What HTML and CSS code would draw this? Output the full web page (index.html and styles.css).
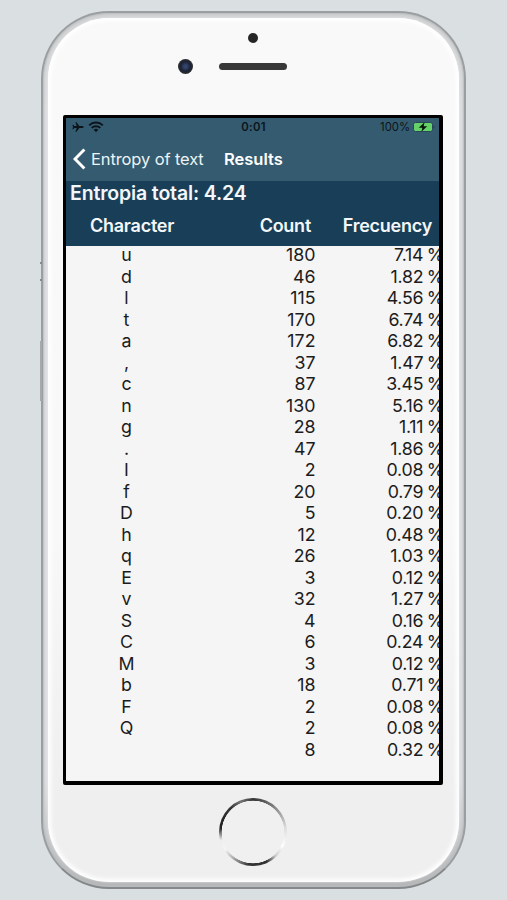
FILE: index.html
```html
<!DOCTYPE html>
<html lang="en">
<head>
    <meta charset="UTF-8">
    <meta name="viewport" content="width=device-width, initial-scale=1.0">
    <title>Results</title>
    <link rel="stylesheet" href="styles.css">
</head>
<body>
    <div class="phone">
        <span class="side-mark mute-top"></span>
        <span class="side-mark mute-bottom"></span>
        <span class="side-mark volume"></span>
        <div class="face">
            <div class="phone-top">
                <span class="sensor"></span>
                <div class="ear">
                    <span class="camera"></span>
                    <span class="speaker"></span>
                </div>
            </div>

            <div class="screen">
                <!-- Status bar and navigation -->
                <div class="top-bar">
                    <div class="status-bar">
                        <div class="status-left">
                            <svg class="plane" viewBox="0 0 12 10"><path d="M11.6 5c0 .6-.7.9-1.4.9H7.3L4.5 9.7H3.4l1.3-3.8H2.3L1.2 7.3H.4L1 5 .4 2.7h.8l1.1 1.4h2.4L3.4.3h1.1l2.8 3.8h2.9c.7 0 1.4.3 1.4.9z"/></svg>
                            <svg class="wifi" viewBox="0 0 16 12"><path d="M1.2 4.4a9.7 9.7 0 0 1 13.6 0M3.7 6.9a6.2 6.2 0 0 1 8.6 0" fill="none" stroke="#0b141a" stroke-width="2"/><path d="M5.6 8.8a3.5 3.5 0 0 1 4.8 0L8 11.3z"/></svg>
                        </div>
                        <span class="time">0:01</span>
                        <div class="status-right">
                            <span>100%</span>
                            <svg class="battery" viewBox="0 0 22 10"><rect x=".5" y=".5" width="19" height="9" rx="2" fill="#64d268" stroke="#29475a"/><path d="M20.6 3.5v3c1-.3 1-2.7 0-3z" fill="#1d3442"/><path d="M11.6.2 5.8 5.7h3.6L8.4 9.8l5.8-5.5h-3.6z" fill="#08140c"/></svg>
                        </div>
                    </div>
                    <div class="nav-bar">
                        <svg class="back-arrow" viewBox="0 0 13 22"><path d="M11.4 1.5 2 11l9.4 9.5" fill="none" stroke="#fff" stroke-width="3"/></svg>
                        <span class="back-text">Entropy of text</span>
                        <span class="title">Results</span>
                    </div>
                </div>

                <div class="summary">
                    <h1>Entropia total: 4.24</h1>
                    <div class="columns">
                        <span class="col-char">Character</span>
                        <span class="col-count">Count</span>
                        <span class="col-freq">Frecuency</span>
                    </div>
                </div>

                <div class="list">
                    <div class="row"><span>u</span><span>180</span><span>7.14 %</span></div>
                    <div class="row"><span>d</span><span>46</span><span>1.82 %</span></div>
                    <div class="row"><span>l</span><span>115</span><span>4.56 %</span></div>
                    <div class="row"><span>t</span><span>170</span><span>6.74 %</span></div>
                    <div class="row"><span>a</span><span>172</span><span>6.82 %</span></div>
                    <div class="row"><span>,</span><span>37</span><span>1.47 %</span></div>
                    <div class="row"><span>c</span><span>87</span><span>3.45 %</span></div>
                    <div class="row"><span>n</span><span>130</span><span>5.16 %</span></div>
                    <div class="row"><span>g</span><span>28</span><span>1.11 %</span></div>
                    <div class="row"><span>.</span><span>47</span><span>1.86 %</span></div>
                    <div class="row"><span>I</span><span>2</span><span>0.08 %</span></div>
                    <div class="row"><span>f</span><span>20</span><span>0.79 %</span></div>
                    <div class="row"><span>D</span><span>5</span><span>0.20 %</span></div>
                    <div class="row"><span>h</span><span>12</span><span>0.48 %</span></div>
                    <div class="row"><span>q</span><span>26</span><span>1.03 %</span></div>
                    <div class="row"><span>E</span><span>3</span><span>0.12 %</span></div>
                    <div class="row"><span>v</span><span>32</span><span>1.27 %</span></div>
                    <div class="row"><span>S</span><span>4</span><span>0.16 %</span></div>
                    <div class="row"><span>C</span><span>6</span><span>0.24 %</span></div>
                    <div class="row"><span>M</span><span>3</span><span>0.12 %</span></div>
                    <div class="row"><span>b</span><span>18</span><span>0.71 %</span></div>
                    <div class="row"><span>F</span><span>2</span><span>0.08 %</span></div>
                    <div class="row"><span>Q</span><span>2</span><span>0.08 %</span></div>
                    <div class="row"><span></span><span>8</span><span>0.32 %</span></div>
                </div>
            </div>

            <div class="home-button"></div>
        </div>
    </div>
</body>
</html>
```
FILE: styles.css
```css
* {
    margin: 0;
    padding: 0;
    box-sizing: border-box;
}

body {
    height: 900px;
    padding: 11px 0 0 41px;
    background: #dadfe2;
    font-family: Inter, "Liberation Sans", sans-serif;
    overflow: hidden;
}

.phone {
    position: relative;
    width: 425px;
    height: 878px;
    padding: 5px;
    border: 2px solid #9b9ea0;
    border-bottom-color: #858789;
    border-radius: 68px;
    background: linear-gradient(#d0d2d3, #dcdee0 12%, #dcdee0 88%, #b4b6b7);
    box-shadow: inset 0 0 2px 1px #b9bcbe;
}

.side-mark {
    position: absolute;
    left: -3px;
    width: 2px;
    height: 2px;
    background: #858a8c;
}

.mute-top {
    top: 249px;
}

.mute-bottom {
    top: 266px;
}

.volume {
    top: 328px;
    height: 60px;
    background: #a5a9ab;
}

.face {
    height: 864px;
    border-radius: 61px;
    padding: 0 15px;
    background: linear-gradient(#f9f9f9, #f8f8f8 60%, #efefef 90%);
    box-shadow: inset 0 0 4px 3px #fff, 0 0 2px #eee;
}

.phone-top {
    height: 97px;
    padding-top: 15px;
}

.sensor {
    display: block;
    width: 10px;
    height: 10px;
    margin-left: 185px;
    border-radius: 50%;
    background: #262626;
}

.ear {
    display: flex;
    align-items: center;
    margin: 16px 0 0 115px;
}

.camera {
    width: 15px;
    height: 15px;
    border-radius: 50%;
    background: radial-gradient(circle at 50% 50%, #34436b 0 15%, #1a2236 45%, #292b2d 65%);
}

.speaker {
    width: 68px;
    height: 7px;
    margin-left: 26px;
    border-radius: 4px;
    background: #383838;
}

.screen {
    width: 380px;
    height: 670px;
    border: solid #000;
    border-width: 3px 4px 4px 3px;
    border-radius: 2px;
    background: #f5f5f5;
    overflow: hidden;
}

.top-bar {
    height: 63px;
    background: #345b70;
    color: #fff;
}

.status-bar {
    display: grid;
    grid-template-columns: 1fr auto 1fr;
    align-items: center;
    height: 18px;
    padding: 0 4px 0 6px;
    color: #0b141a;
    font-size: 11.3px;
}

.status-left,
.status-right {
    display: flex;
    align-items: center;
}

.status-right {
    justify-content: flex-end;
    gap: 3px;
}

.plane {
    width: 12px;
    height: 10px;
    fill: #0b141a;
}

.wifi {
    width: 16px;
    height: 12px;
    margin-left: 4px;
    fill: #0b141a;
}

.time {
    font-weight: 600;
    letter-spacing: 0.3px;
}

.battery {
    width: 22px;
    height: 10px;
}

.nav-bar {
    display: flex;
    align-items: center;
    height: 46px;
    padding-left: 7px;
    font-size: 16.5px;
}

.back-arrow {
    width: 13px;
    height: 22px;
}

.back-text {
    width: 133px;
    margin-left: 5px;
    color: #edf3f6;
    letter-spacing: -0.12px;
    white-space: nowrap;
}

.title {
    font-weight: 600;
}

.summary {
    height: 65px;
    background: #193f58;
    color: #f3f7f9;
}

.summary h1 {
    padding-left: 4px;
    font-size: 19.5px;
    font-weight: 600;
    letter-spacing: -0.15px;
    line-height: 25px;
}

.columns {
    display: flex;
    font-size: 18px;
    font-weight: 600;
    letter-spacing: -0.25px;
    line-height: 40px;
}

.col-char {
    width: 170px;
    padding-left: 24px;
}

.col-count {
    width: 75px;
    text-align: right;
}

.col-freq {
    width: 121px;
    text-align: right;
}

.list {
    display: flex;
    flex-direction: column;
    justify-content: flex-end;
    height: 535px;
    padding-bottom: 20.6px;
    overflow: hidden;
}

.row {
    display: grid;
    grid-template-columns: 121px 128.5px 128.5px;
    flex: none;
    height: 21.53px;
    color: #1c1c1c;
    font-size: 17.8px;
    line-height: 21.5px;
    text-align: right;
    white-space: nowrap;
}

.row span:first-child {
    text-align: center;
}

.row span:last-child {
    letter-spacing: -0.25px;
    word-spacing: -1.2px;
}

.home-button {
    width: 68px;
    height: 68px;
    margin: 13px 0 0 156px;
    border-radius: 50%;
    background:
        radial-gradient(circle, #f0f0f0 0 31px, transparent 31.6px),
        conic-gradient(#333, #888 12%, #ddd 23%, #fff 32%, #ccc 38%, #333 43%, #333 52%, #aaa 60%, #f5f5f5 66%, #eee 71%, #222 77%, #333 88%, #777 94%, #333);
}
```
